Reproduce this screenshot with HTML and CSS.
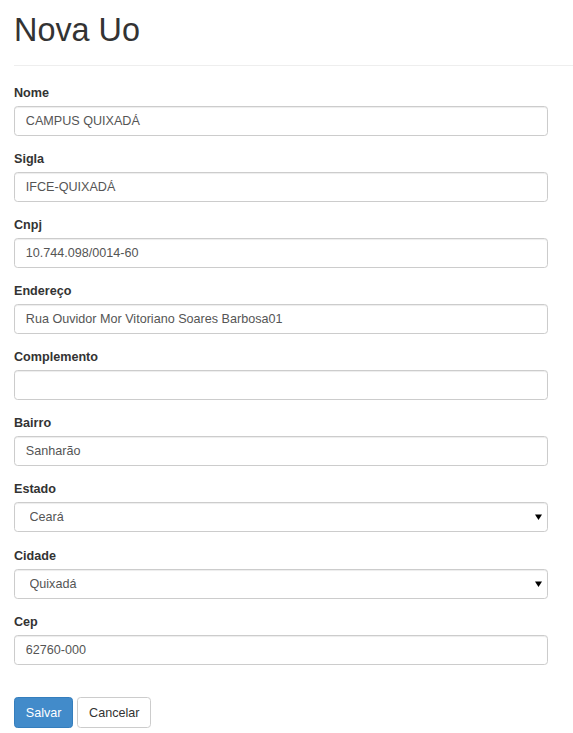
FILE: index.html
```html
<!DOCTYPE html>
<html lang="pt-BR">
<head>
<meta charset="utf-8">
<title>Nova Uo</title>
<link rel="stylesheet" href="styles.css">
</head>
<body>
<div class="page">
  <h1 class="title">Nova Uo</h1>
  <hr class="divider">
  <form class="form">
    <div class="group">
      <label class="label">Nome</label>
      <input class="control" type="text" value="CAMPUS QUIXADÁ">
    </div>
    <div class="group">
      <label class="label">Sigla</label>
      <input class="control" type="text" value="IFCE-QUIXADÁ">
    </div>
    <div class="group">
      <label class="label">Cnpj</label>
      <input class="control" type="text" value="10.744.098/0014-60">
    </div>
    <div class="group">
      <label class="label">Endereço</label>
      <input class="control" type="text" value="Rua Ouvidor Mor Vitoriano Soares Barbosa01">
    </div>
    <div class="group">
      <label class="label">Complemento</label>
      <input class="control" type="text" value="">
    </div>
    <div class="group">
      <label class="label">Bairro</label>
      <input class="control" type="text" value="Sanharão">
    </div>
    <div class="group">
      <label class="label">Estado</label>
      <div class="select-wrap">
        <select class="control select"><option>Ceará</option></select>
        <svg class="caret" width="7" height="6" viewBox="0 0 7 6"><path d="M0 0.5H7L3.5 6Z" fill="#000"/></svg>
      </div>
    </div>
    <div class="group">
      <label class="label">Cidade</label>
      <div class="select-wrap">
        <select class="control select"><option>Quixadá</option></select>
        <svg class="caret" width="7" height="6" viewBox="0 0 7 6"><path d="M0 0.5H7L3.5 6Z" fill="#000"/></svg>
      </div>
    </div>
    <div class="group">
      <label class="label">Cep</label>
      <input class="control" type="text" value="62760-000">
    </div>
    <div class="actions">
      <button type="button" class="btn btn-primary">Salvar</button>
      <button type="button" class="btn btn-default">Cancelar</button>
    </div>
  </form>
</div>
</body>
</html>
```

FILE: styles.css
```css
html, body {
  margin: 0;
  padding: 0;
  background: #fff;
}
body {
  font-family: "Liberation Sans", Arial, Helvetica, sans-serif;
  font-size: 12.6px;
  line-height: 18px;
  color: #333;
}
.page {
  padding-left: 14px;
}
.title {
  margin: 13px 0 0;
  font-size: 32.4px;
  font-weight: 500;
  line-height: 1.1;
  color: #333;
}
.divider {
  margin: 16px 0 18px;
  border: 0;
  border-top: 1px solid #eee;
  height: 0;
}
.form {
  width: 534px;
}
.group {
  margin-bottom: 14.13px;
}
.label {
  display: block;
  font-weight: bold;
  font-size: 12.6px;
  line-height: 18px;
  margin-bottom: 4px;
}
.control {
  display: block;
  box-sizing: border-box;
  width: 100%;
  height: 30px;
  margin: 0;
  padding: 0 10.8px;
  font-family: inherit;
  font-size: 12.6px;
  color: #555;
  background: #fff;
  border: 1px solid #ccc;
  border-radius: 3.6px;
  box-shadow: inset 0 1px 1px rgba(0,0,0,.075);
  outline: none;
}
.select-wrap {
  position: relative;
}
.select {
  -webkit-appearance: none;
  appearance: none;
  padding-left: 14.5px;
  color: #555;
}
.caret {
  position: absolute;
  right: 6px;
  top: 12px;
  pointer-events: none;
}
.actions {
  display: flex;
  gap: 4px;
  margin-top: 32.5px;
}
.btn {
  box-sizing: border-box;
  height: 31px;
  padding: 0 10.8px;
  font-family: inherit;
  font-size: 12.6px;
  border-radius: 3.6px;
  border: 1px solid transparent;
  cursor: pointer;
}
.btn-primary {
  background: #428bca;
  border-color: #357ebd;
  color: #fff;
}
.btn-default {
  background: #fff;
  border-color: #ccc;
  color: #333;
}
```
